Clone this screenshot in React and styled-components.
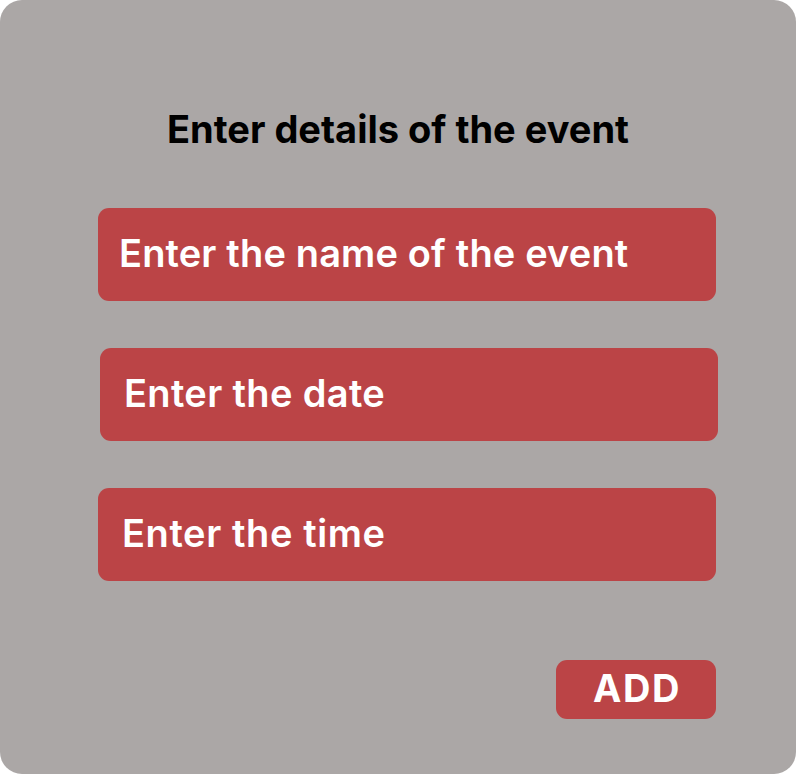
import styled, { createGlobalStyle } from "styled-components";

const GlobalStyle = createGlobalStyle`
  body {
    margin: 0;
    background: #ffffff;
    font-family: Inter, "Noto Sans", sans-serif;
  }
`;

const Card = styled.div`
  box-sizing: border-box;
  width: 796px;
  height: 774px;
  border-radius: 22px;
  background-color: #aba7a6;
  padding: 107px 0 0 98px;
  display: flex;
  flex-direction: column;
`;

const Title = styled.h1`
  margin: 0 0 57px -98px;
  height: 44px;
  line-height: 44px;
  font-size: 38px;
  font-weight: 700;
  letter-spacing: 0;
  text-align: center;
  color: #000;
`;

const Field = styled.div`
  box-sizing: border-box;
  width: 618px;
  height: 93px;
  margin-left: ${(p) => p.shift || 0}px;
  margin-bottom: 47px;
  padding: 0 0 3px ${(p) => p.pad}px;
  display: flex;
  align-items: center;
  border-radius: 11px;
  background-color: #bb4446;
  color: #fff;
  font-size: 38px;
  font-weight: 600;
  letter-spacing: ${(p) => p.spacing || 0.15}px;
`;

const Actions = styled.div`
  width: 618px;
  display: flex;
  justify-content: flex-end;
  margin-top: 32px;
`;

const AddButton = styled.button`
  width: 160px;
  height: 59px;
  border: none;
  border-radius: 11px;
  background-color: #bb4446;
  color: #fff;
  font-family: Inter, "Noto Sans", sans-serif;
  font-size: 38px;
  font-weight: 700;
  letter-spacing: 1.5px;
  padding: 0 0 3px 2px;
  cursor: pointer;
`;

const App = () => {
  return (
    <>
      <GlobalStyle />
      <Card>
        <Title>Enter details of the event</Title>
        <Field pad={21}>Enter the name of the event</Field>
        <Field shift={2} pad={24} spacing={0.35}>Enter the date</Field>
        <Field pad={24} spacing={0.6}>Enter the time</Field>
        <Actions>
          <AddButton>ADD</AddButton>
        </Actions>
      </Card>
    </>
  );
};

export default App;
